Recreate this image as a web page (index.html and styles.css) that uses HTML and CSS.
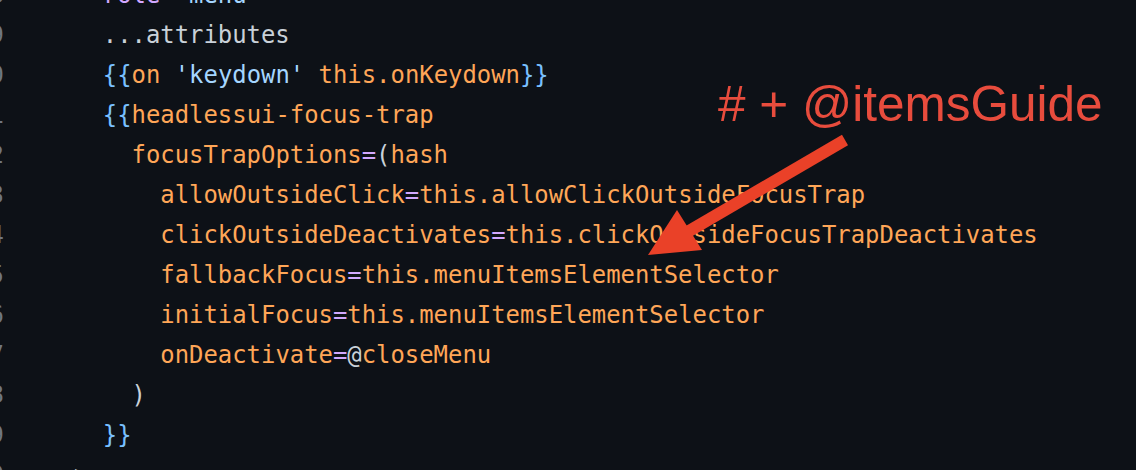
FILE: index.html
```html
<!DOCTYPE html>
<html lang="en">
<head>
<meta charset="UTF-8">
<title>menu.hbs</title>
<link rel="stylesheet" href="styles.css">
</head>
<body>

<!-- CODE VIEW -->
<div class="editor">
  <div class="gutter">
    <div>28</div><div>29</div><div>30</div><div>31</div><div>32</div><div>33</div><div>34</div>
    <div>35</div><div>36</div><div>37</div><div>38</div><div>39</div><div>40</div>
  </div>
  <pre class="code"><span class="at">  role</span>=<span class="str">"menu"</span>
  ...attributes
  <span class="br">{{</span><span class="fn">on</span> <span class="str">'keydown'</span> <span class="fn">this.onKeydown</span><span class="br">}}</span>
  <span class="br">{{</span><span class="fn">headlessui-focus-trap</span>
    <span class="fn">focusTrapOptions</span><span class="op">=</span>(<span class="fn">hash</span>
      <span class="fn">allowOutsideClick</span><span class="op">=</span><span class="fn">this.allowClickOutsideFocusTrap</span>
      <span class="fn">clickOutsideDeactivates</span><span class="op">=</span><span class="fn">this.clickOutsideFocusTrapDeactivates</span>
      <span class="fn">fallbackFocus</span><span class="op">=</span><span class="fn">this.menuItemsElementSelector</span>
      <span class="fn">initialFocus</span><span class="op">=</span><span class="fn">this.menuItemsElementSelector</span>
      <span class="fn">onDeactivate</span><span class="op">=</span>@<span class="fn">closeMenu</span>
    )
  <span class="br">}}</span>
&gt;</pre>
</div>

<!-- ANNOTATION -->
<div class="note"># + @itemsGuide</div>
<svg class="arrow" width="1136" height="470" viewBox="0 0 1136 470">
  <line x1="845" y1="140" x2="684" y2="234" stroke="#ea4128" stroke-width="12" />
  <polygon points="648,255 677,210 702,250" fill="#ea4128" />
</svg>

</body>
</html>
```

FILE: styles.css
```css
html, body {
  margin: 0;
  height: 100%;
  background: #0d1117;
  overflow: hidden;
}

.editor {
  display: flex;
  margin-top: -25px;
  font-family: "DejaVu Sans Mono", monospace;
  font-size: 23.9px;
  line-height: 40px;
}

.gutter {
  flex: none;
  width: 60px;
  margin-left: -56px;
  text-align: right;
  color: #6e7681;
}

.code {
  margin: 0 0 0 70px;
  font: inherit;
  color: #c9d1d9;
  white-space: pre;
}

.at { color: #d2a8ff; }
.str { color: #a5d6ff; }
.br { color: #79c0ff; }
.fn { color: #ffa657; }
.op { color: #d2a8ff; }

/* annotation drawn over the screenshot */
.note {
  position: absolute;
  left: 718px;
  top: 76px;
  font-family: "Liberation Sans", Arial, sans-serif;
  font-size: 49.5px;
  line-height: 56px;
  color: #e84c3d;
}

.arrow {
  position: absolute;
  left: 0;
  top: 0;
}
```
